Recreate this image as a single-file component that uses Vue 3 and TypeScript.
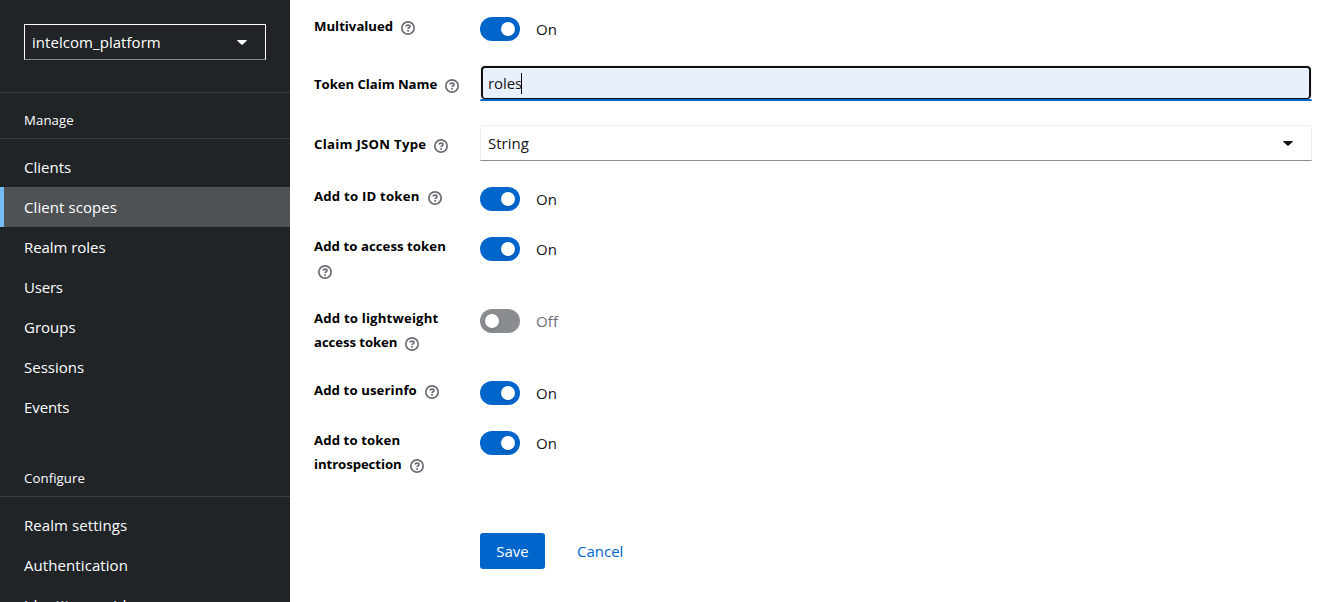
<script setup lang="ts">
import { ref } from 'vue'

interface Line { text: string; tracking?: number }
interface NavGroup { title: string; items: Line[] }
interface Field { label: Line[]; kind: 'switch' | 'text' | 'select'; on?: boolean; value?: string }

const realm = ref('intelcom_platform')
const current = ref('Client scopes')
const groups: NavGroup[] = [
  {
    title: 'Manage',
    items: [
      { text: 'Clients' },
      { text: 'Client scopes', tracking: 0.08 },
      { text: 'Realm roles', tracking: -0.05 },
      { text: 'Users', tracking: -0.2 },
      { text: 'Groups' },
      { text: 'Sessions' },
      { text: 'Events', tracking: -0.1 },
    ],
  },
  {
    title: 'Configure',
    items: [
      { text: 'Realm settings', tracking: 0.07 },
      { text: 'Authentication', tracking: 0.08 },
      { text: 'Identity providers', tracking: 0.05 },
    ],
  },
]
const fields = ref<Field[]>([
  { label: [{ text: 'Multivalued' }], kind: 'switch', on: true },
  { label: [{ text: 'Token Claim Name', tracking: -0.06 }], kind: 'text', value: 'roles' },
  { label: [{ text: 'Claim JSON Type', tracking: 0.27 }], kind: 'select', value: 'String' },
  { label: [{ text: 'Add to ID token', tracking: 0.2 }], kind: 'switch', on: true },
  { label: [{ text: 'Add to access token', tracking: 0.05 }, { text: '' }], kind: 'switch', on: true },
  { label: [{ text: 'Add to lightweight', tracking: 0.17 }, { text: 'access token', tracking: -0.08 }], kind: 'switch', on: false },
  { label: [{ text: 'Add to userinfo', tracking: 0.09 }], kind: 'switch', on: true },
  { label: [{ text: 'Add to token', tracking: 0.1 }, { text: 'introspection', tracking: -0.08 }], kind: 'switch', on: true },
])
const track = (l: Line) => ({ letterSpacing: `${l.tracking ?? 0}px` })
</script>

<template>
  <div class="page">
    <nav class="sidebar">
      <div class="realm-wrap">
        <button class="realm">
          <span>{{ realm }}</span>
          <svg class="caret" width="10" height="5" viewBox="0 0 10 5"><path d="M.6 0H9.4Q10.300 0 9.700.7L5.700 4.600Q5 5.200 4.300 4.600L.3.7Q-.3 0 .6 0Z" /></svg>
        </button>
      </div>
      <section v-for="g in groups" :key="g.title" class="group">
        <h2>{{ g.title }}</h2>
        <ul>
          <li v-for="i in g.items" :key="i.text" :class="{ current: i.text === current }" @click="current = i.text">
            <span :style="track(i)">{{ i.text }}</span>
          </li>
        </ul>
      </section>
    </nav>
    <main class="form">
      <div v-for="(f, k) in fields" :key="k" class="row" :class="f.kind">
        <div class="label">
          <div v-for="(line, n) in f.label" :key="n" class="line">
            <span v-if="line.text" :style="track(line)">{{ line.text }}</span>
            <svg v-if="n === f.label.length - 1" class="help" :class="{ alone: !line.text }" width="14" height="14" viewBox="0 0 14 14">
              <circle cx="7" cy="7" r="6.150" />
              <path d="M4.900 5.500C5.200 4.500 6 4.100 7 4.100C8.200 4.100 9 4.700 9 5.500C9 6.700 7.100 6.700 7.100 8.100" />
              <path d="M7.100 9.100V10.700" />
            </svg>
          </div>
        </div>
        <div v-if="f.kind === 'switch'" class="toggle" :class="{ off: !f.on }" @click="f.on = !f.on">
          <span class="track"><span class="knob"></span></span>
          <span class="state">{{ f.on ? 'On' : 'Off' }}</span>
        </div>
        <div v-else-if="f.kind === 'text'" class="input">
          <div class="ring"><span class="value">{{ f.value }}</span><i class="cursor"></i></div>
        </div>
        <div v-else class="select">
          <span>{{ f.value }}</span>
          <svg class="caret" width="10" height="5" viewBox="0 0 10 5"><path d="M.6 0H9.4Q10.300 0 9.700.7L5.700 4.600Q5 5.200 4.300 4.600L.3.7Q-.3 0 .6 0Z" /></svg>
        </div>
      </div>
      <div class="actions">
        <button class="save">Save</button>
        <button class="cancel">Cancel</button>
      </div>
    </main>
  </div>
</template>

<style>
html, body { margin: 0; overflow: hidden; }
</style>

<style scoped>
.page { display: flex; width: 100%; height: 602px; overflow: hidden; background: #fff; color: #151515; font: 15px/24px "Open Sans", "Noto Sans", sans-serif; }
.page * { box-sizing: border-box; }
button { font: inherit; border: 0; background: none; margin: 0; }
.sidebar { width: 290px; height: 602px; flex: none; overflow: hidden; background: #212427; color: #fff; }
.realm-wrap { height: 93px; padding: 24px; border-bottom: 1px solid #3c3f42; }
.realm { display: flex; align-items: center; justify-content: space-between; width: 242px; height: 36px; padding: 0 18px 0 7px; border: 1px solid #fff; border-bottom-color: #8a8d90; color: #fff; letter-spacing: .05px; }
.caret { display: block; fill: currentColor; }
.group + .group { margin-top: 24px; }
h2 { margin: 0; height: 46px; padding: 16px 24px 0; border-bottom: 1px solid #3c3f42; font-size: 13.2px; font-weight: 400; line-height: 23px; letter-spacing: .1px; }
ul { list-style: none; margin: 0; padding: 8px 0 0; }
li { height: 40px; padding: 8px 24px; white-space: nowrap; }
li.current { background: #4f5255; border-left: 4px solid #73bcf7; padding-left: 20px; }
.form { flex: 1; padding: 15px 17px 0 24px; display: flex; flex-direction: column; gap: 24px; }
.row { display: grid; grid-template-columns: 150px 1fr; column-gap: 16px; }
.row.text .label, .row.select .label { padding-top: 7px; }
.label { color: #000; font-size: 13.2px; font-weight: 700; white-space: nowrap; }
.row.switch .label { margin-top: -1px; margin-bottom: 1px; }
.line { display: flex; align-items: center; height: 24px; }
.help { margin: 3px 0 0 8px; fill: none; stroke: #6a6e73; stroke-width: 1.7; }
.help.alone { margin-left: 4px; }
.toggle { display: flex; gap: 16px; padding-top: 2px; height: 26px; }
.track { width: 40px; height: 24px; border-radius: 12px; background: #06c; padding: 5px 5px 5px 21px; }
.knob { display: block; width: 14px; height: 14px; border-radius: 50%; background: #fff; box-shadow: 0 2px 4px rgba(3, 3, 3, .12); }
.off .track { background: #8a8d90; padding-left: 5px; }
.state { letter-spacing: .2px; }
.off .state { color: #6a6e73; }
.input { height: 36px; border: 1px solid #f0f0f0; border-bottom: 2px solid #06c; }
.ring { display: flex; align-items: center; height: 33px; border: 2px solid #101010; border-bottom-width: 1px; border-radius: 4px; background: #e8f0fe; padding-left: 5px; }
.value { letter-spacing: -.1px; }
.cursor { width: 1px; height: 21px; margin-left: -1px; background: #000; }
.select > .label + .select { display: flex; align-items: center; justify-content: space-between; height: 36px; padding: 0 18px 0 7px; border: 1px solid #f0f0f0; border-bottom-color: #8a8d90; }
.actions { display: flex; padding: 32px 0 0 166px; }
.save { width: 65px; height: 36px; padding: 0; border-radius: 3px; background: #06c; color: #fff; }
.cancel { height: 36px; padding: 0; margin-left: 32px; color: #06c; }
</style>
